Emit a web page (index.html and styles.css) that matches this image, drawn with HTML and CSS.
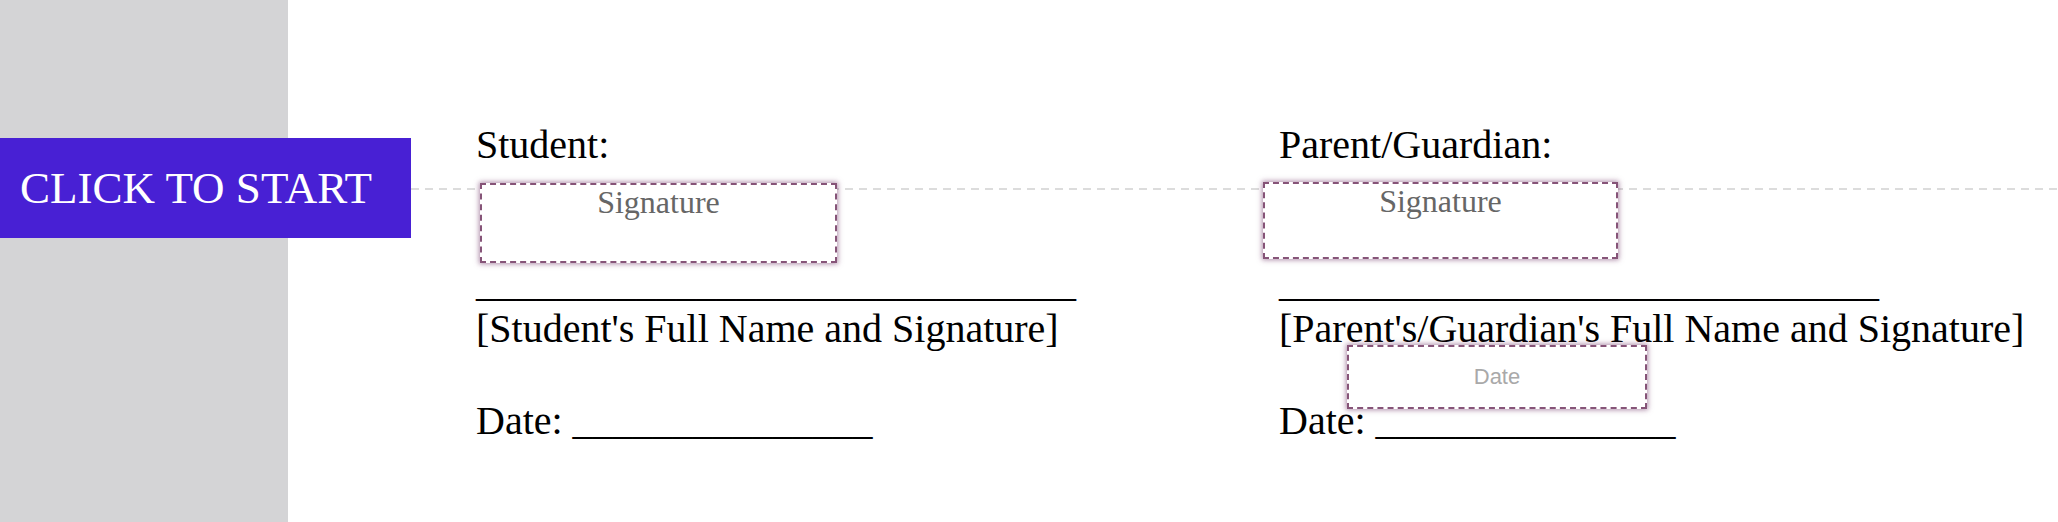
FILE: index.html
```html
<!DOCTYPE html>
<html lang="en">
<head>
<meta charset="utf-8">
<title>Signatures</title>
<link rel="stylesheet" href="styles.css">
</head>
<body>
<div class="page">
  <aside class="sidebar"></aside>
  <main class="main">
    <div class="doc">
      <div class="col">
        Student:<br><br><br>______________________________<br>[Student's Full Name and Signature]<br><br>Date: _______________
      </div>
      <div class="col">
        Parent/Guardian:<br><br><br>______________________________<br>[Parent's/Guardian's Full Name and Signature]<br><br>Date: _______________
      </div>
      <div class="field sig sig-student">Signature</div>
      <div class="field sig sig-parent">Signature</div>
      <div class="field date date-parent">Date</div>
    </div>
  </main>
  <div class="guide"></div>
  <button class="start">CLICK TO START</button>
</div>
</body>
</html>
```

FILE: styles.css
```css
html, body {
  margin: 0;
  padding: 0;
  background: #ffffff;
}
.page {
  position: relative;
  display: flex;
  width: 2058px;
  height: 522px;
  overflow: hidden;
}
.sidebar {
  width: 288px;
  flex: 0 0 288px;
  background: #d4d4d6;
}
.main {
  flex: 1;
  padding: 122px 0 0 188px;
}
.doc {
  position: relative;
  display: grid;
  grid-template-columns: 803px auto;
  font-family: "Liberation Serif", "Times New Roman", serif;
  font-size: 40px;
  line-height: 46px;
  color: #000;
}
.col {
  white-space: nowrap;
}
.field {
  position: absolute;
  box-sizing: border-box;
  background: #ffffff;
  border: 2px dashed #865478;
  box-shadow: 0 0 5px 1px rgba(110, 50, 100, 0.55);
  text-align: center;
  z-index: 2;
}
.sig {
  font-family: "Liberation Serif", "Times New Roman", serif;
  font-size: 32px;
  line-height: 35px;
  color: #666666;
  padding-top: 0;
}
.sig-student {
  left: 4px;
  top: 61px;
  width: 357px;
  height: 80px;
}
.sig-parent {
  left: 787px;
  top: 60px;
  width: 355px;
  height: 77px;
}
.date {
  display: flex;
  align-items: center;
  justify-content: center;
  font-family: "Liberation Sans", Arial, sans-serif;
  font-size: 22px;
  line-height: 1;
  color: #a9a9a9;
}
.date-parent {
  left: 871px;
  top: 223px;
  width: 300px;
  height: 64px;
}
.guide {
  position: absolute;
  left: 411px;
  right: 0;
  top: 188px;
  height: 2px;
  background: repeating-linear-gradient(90deg, #dcdcdc 0 8px, transparent 8px 14px);
  z-index: 0;
  pointer-events: none;
}
.start {
  position: absolute;
  left: 0;
  top: 138px;
  width: 411px;
  height: 100px;
  margin: 0;
  padding: 0 0 0 20px;
  border: 0;
  background: #4820d4;
  color: #ffffff;
  font-family: "Liberation Serif", "Times New Roman", serif;
  font-size: 45px;
  text-align: left;
  cursor: pointer;
}
```
